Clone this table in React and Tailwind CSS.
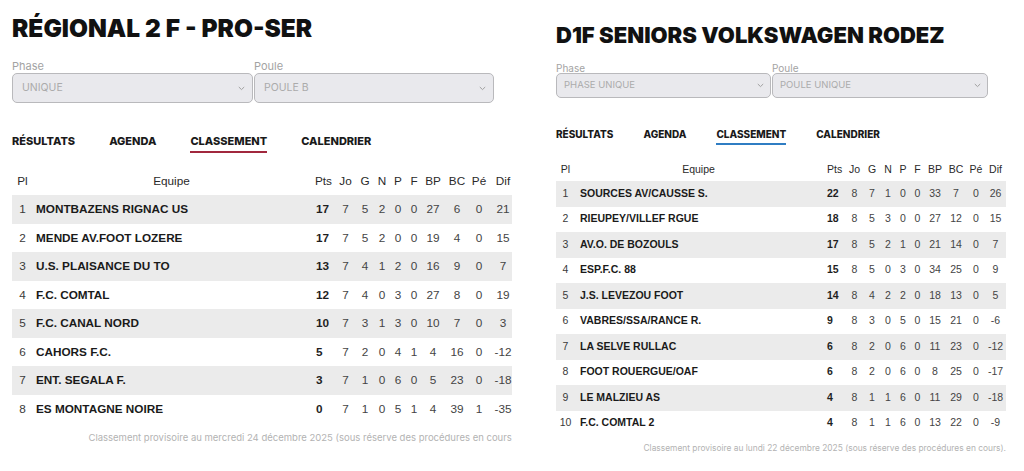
import React from "react";

const leftRows = [
  [1, "MONTBAZENS RIGNAC US", 17, 7, 5, 2, 0, 0, 27, 6, 0, 21],
  [2, "MENDE AV.FOOT LOZERE", 17, 7, 5, 2, 0, 0, 19, 4, 0, 15],
  [3, "U.S. PLAISANCE DU TO", 13, 7, 4, 1, 2, 0, 16, 9, 0, 7],
  [4, "F.C. COMTAL", 12, 7, 4, 0, 3, 0, 27, 8, 0, 19],
  [5, "F.C. CANAL NORD", 10, 7, 3, 1, 3, 0, 10, 7, 0, 3],
  [6, "CAHORS F.C.", 5, 7, 2, 0, 4, 1, 4, 16, 0, -12],
  [7, "ENT. SEGALA F.", 3, 7, 1, 0, 6, 0, 5, 23, 0, -18],
  [8, "ES MONTAGNE NOIRE", 0, 7, 1, 0, 5, 1, 4, 39, 1, -35],
];

const rightRows = [
  [1, "SOURCES AV/CAUSSE S.", 22, 8, 7, 1, 0, 0, 33, 7, 0, 26],
  [2, "RIEUPEY/VILLEF RGUE", 18, 8, 5, 3, 0, 0, 27, 12, 0, 15],
  [3, "AV.O. DE BOZOULS", 17, 8, 5, 2, 1, 0, 21, 14, 0, 7],
  [4, "ESP.F.C. 88", 15, 8, 5, 0, 3, 0, 34, 25, 0, 9],
  [5, "J.S. LEVEZOU FOOT", 14, 8, 4, 2, 2, 0, 18, 13, 0, 5],
  [6, "VABRES/SSA/RANCE R.", 9, 8, 3, 0, 5, 0, 15, 21, 0, -6],
  [7, "LA SELVE RULLAC", 6, 8, 2, 0, 6, 0, 11, 23, 0, -12],
  [8, "FOOT ROUERGUE/OAF", 6, 8, 2, 0, 6, 0, 8, 25, 0, -17],
  [9, "LE MALZIEU AS", 4, 8, 1, 1, 6, 0, 11, 29, 0, -18],
  [10, "F.C. COMTAL 2", 4, 8, 1, 1, 6, 0, 13, 22, 0, -9],
];

const heads = ["Pl", "Equipe", "Pts", "Jo", "G", "N", "P", "F", "BP", "BC", "Pé", "Dif"];

const Chevron = () => (
  <svg width="7" height="5" viewBox="0 0 7 5" fill="none">
    <path d="M0.8 1l2.7 2.6L6.2 1" stroke="#a0a0a0" strokeWidth="1" />
  </svg>
);

function Select({ label, value, big }) {
  return (
    <div className="flex flex-col">
      <div
        className={
          big
            ? "text-[11px] leading-[13px] text-[#a3a3a3]"
            : "text-[10px] leading-[10px] text-[#a3a3a3]"
        }
        style={{ fontFamily: "Inter, sans-serif" }}
      >
        {label}
      </div>
      <div
        className={
          (big ? "h-[30px] pl-[9px] pr-[7px] text-[10.5px]" : "h-[25px] pl-[7px] pr-[6px] text-[9.5px]") +
          " flex items-center justify-between rounded-[5px] border border-[#b9b9bc] bg-[#e9e9ed] text-[#ababab]"
        }
        style={{ fontFamily: "Inter, sans-serif" }}
      >
        <span>{value}</span>
        <Chevron />
      </div>
    </div>
  );
}

function Tabs({ big, color }) {
  const items = ["RÉSULTATS", "AGENDA", "CLASSEMENT", "CALENDRIER"];
  return (
    <div
      className={(big ? "gap-[34px] text-[11px]" : "gap-[30px] text-[10px]") + " flex font-extrabold text-[#1a1a1a]"}
      style={{ fontFamily: "Inter, sans-serif" }}
    >
      {items.map((t) => (
        <div
          key={t}
          className={
            (big ? "pb-[3px] leading-[13px]" : "pb-[3px] leading-[12px]") +
            " border-b-2 " +
            (t === "CLASSEMENT" ? color : "border-transparent")
          }
        >
          {t}
        </div>
      ))}
    </div>
  );
}

function Table({ rows, big }) {
  const cols = big
    ? "grid grid-cols-[21px_277px_25px_21px_18px_16px_16px_16px_22px_26px_18px_30px]"
    : "grid grid-cols-[19px_247px_23px_19px_16px_16px_14px_15px_20px_22px_18px_21px]";
  const rowH = big ? "h-[28.5px]" : "h-[25.5px]";
  const fs = big ? "text-[11.75px]" : "text-[10.5px]";
  return (
    <div className={big ? "w-[506px]" : "w-[450px]"} style={{ fontFamily: '"Liberation Sans", Arial, sans-serif' }}>
      <div className={cols + " items-center text-[#2a2a2a] " + fs + (big ? " h-[28px]" : " h-[23px]")}>
        {heads.map((h, i) => (
          <div key={h} className={i === 2 ? "pl-[5px]" : "text-center"}>
            {h}
          </div>
        ))}
      </div>
      {rows.map((r, ri) => (
        <div
          key={ri}
          className={cols + " items-center " + rowH + " " + fs + (ri % 2 === 0 ? " bg-[#ebebeb]" : "")}
        >
          {r.map((v, i) => (
            <div
              key={i}
              className={
                i === 0
                  ? "text-center text-[#3a3a3a]"
                  : i === 1
                  ? (big ? "pl-[3px]" : "pl-[5px]") + " font-bold text-[#1a1a1a] whitespace-nowrap"
                  : i === 2
                  ? (big ? "pl-[6px]" : "pl-[5px]") + " font-bold text-[#1f1f1f]"
                  : "text-center text-[#444]"
              }
            >
              {v}
            </div>
          ))}
        </div>
      ))}
    </div>
  );
}

export default function App() {
  return (
    <div className="flex h-[471px] w-[1024px] bg-white overflow-hidden">
      <div className="w-[512px] shrink-0 overflow-hidden pl-[12px] pt-[16px]">
        <h1
          className="text-[24.5px] leading-[24px] font-black text-[#111] whitespace-nowrap"
          style={{ fontFamily: "Inter, sans-serif" }}
        >
          RÉGIONAL 2 F - PRO-SER
        </h1>
        <div className="mt-[20px] grid w-[482px] grid-cols-[241px_240px] gap-[1px]">
          <Select label="Phase" value="UNIQUE" big />
          <Select label="Poule" value="POULE B" big />
        </div>
        <div className="mt-[32px]">
          <Tabs big color="border-[#a1283d]" />
        </div>
        <div className="mt-[14px]">
          <Table rows={leftRows} big />
        </div>
        <div
          className="mt-[8px] w-[506px] text-right text-[9.5px] leading-[13px] text-[#b3b3b3] whitespace-nowrap"
          style={{ fontFamily: "Inter, sans-serif" }}
        >
          Classement provisoire au mercredi 24 décembre 2025 (sous réserve des procédures en cours).
        </div>
      </div>
      <div className="ml-[44px] w-[450px] shrink-0 pt-[24px]">
        <h1
          className="text-[22px] leading-[22px] font-black text-[#111] whitespace-nowrap"
          style={{ fontFamily: "Inter, sans-serif" }}
        >
          D1F SENIORS VOLKSWAGEN RODEZ
        </h1>
        <div className="mt-[17px] grid w-[432px] grid-cols-[215px_216px] gap-[1px]">
          <Select label="Phase" value="PHASE UNIQUE" />
          <Select label="Poule" value="POULE UNIQUE" />
        </div>
        <div className="mt-[30px]">
          <Tabs color="border-[#2f7dc3]" />
        </div>
        <div className="mt-[13px]">
          <Table rows={rightRows} />
        </div>
        <div
          className="mt-[6px] text-right text-[8.4px] leading-[12px] text-[#b3b3b3] whitespace-nowrap"
          style={{ fontFamily: "Inter, sans-serif" }}
        >
          Classement provisoire au lundi 22 décembre 2025 (sous réserve des procédures en cours).
        </div>
      </div>
    </div>
  );
}
